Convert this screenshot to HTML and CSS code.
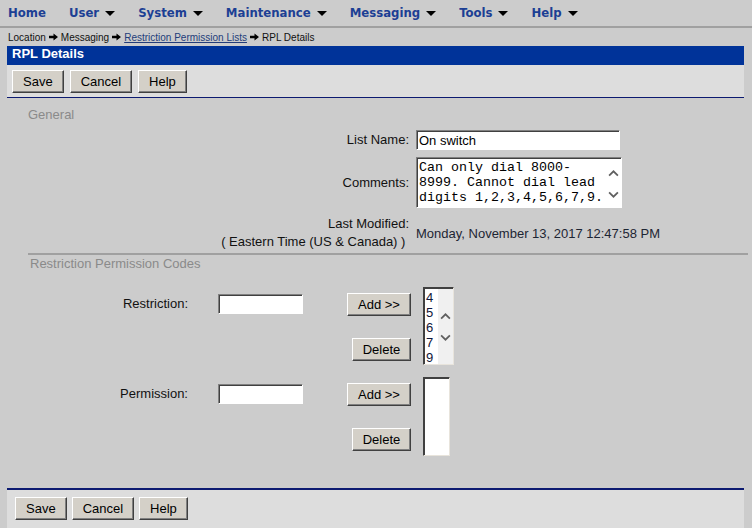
FILE: index.html
```html
<!DOCTYPE html>
<html>
<head>
<meta charset="utf-8">
<link rel="stylesheet" href="styles.css">
</head>
<body>
<div class="nav">
  <div class="nav-item">Home</div>
  <div class="nav-item">User <span class="tri"></span></div>
  <div class="nav-item">System <span class="tri"></span></div>
  <div class="nav-item">Maintenance <span class="tri"></span></div>
  <div class="nav-item">Messaging <span class="tri"></span></div>
  <div class="nav-item">Tools <span class="tri"></span></div>
  <div class="nav-item">Help <span class="tri"></span></div>
</div>
<div class="crumbs">
  <span>Location</span>
  <svg class="arr" viewBox="0 0 10 8" width="9" height="8"><path d="M0 2.5H5V0L10 4L5 8V5.5H0Z" fill="#000"/></svg>
  <span>Messaging</span>
  <svg class="arr" viewBox="0 0 10 8" width="9" height="8"><path d="M0 2.5H5V0L10 4L5 8V5.5H0Z" fill="#000"/></svg>
  <a class="crumb-link">Restriction Permission Lists</a>
  <svg class="arr" viewBox="0 0 10 8" width="9" height="8"><path d="M0 2.5H5V0L10 4L5 8V5.5H0Z" fill="#000"/></svg>
  <span>RPL Details</span>
</div>
<div class="page">
  <div class="titlebar">RPL Details</div>
  <div class="toolbar">
    <button class="btn">Save</button>
    <button class="btn">Cancel</button>
    <button class="btn">Help</button>
  </div>
  <div class="content">
    <div class="section-title">General</div>
    <div class="form">
      <div class="label">List Name:</div>
      <div class="field"><input class="text-input wide" type="text" value="On switch"></div>
      <div class="label">Comments:</div>
      <div class="field">
        <div class="textarea-box">
          <textarea class="ta">Can only dial 8000-8999. Cannot dial lead digits 1,2,3,4,5,6,7,9.</textarea>
          <div class="sbar">
            <svg viewBox="0 0 10 6" width="11" height="7"><path d="M1 5L5 1L9 5" fill="none" stroke="#606060" stroke-width="1.6"/></svg>
            <svg viewBox="0 0 10 6" width="11" height="7"><path d="M1 1L5 5L9 1" fill="none" stroke="#606060" stroke-width="1.6"/></svg>
          </div>
        </div>
      </div>
      <div class="label two">Last Modified:<br>( Eastern Time (US &amp; Canada) )&nbsp;</div>
      <div class="field value">Monday, November 13, 2017 12:47:58 PM</div>
    </div>
    <div class="separator"></div>
    <div class="section-title sec2">Restriction Permission Codes</div>
    <div class="code-row">
      <div class="code-label">Restriction:</div>
      <input class="text-input small" type="text">
      <div class="code-btns">
        <button class="btn add">Add &gt;&gt;</button>
        <button class="btn del">Delete</button>
      </div>
      <div class="listbox">
        <div class="items"><div>4</div><div>5</div><div>6</div><div>7</div><div>9</div></div>
        <div class="lsbar">
          <svg viewBox="0 0 10 6" width="11" height="7"><path d="M1 5L5 1L9 5" fill="none" stroke="#606060" stroke-width="1.6"/></svg>
          <svg viewBox="0 0 10 6" width="11" height="7"><path d="M1 1L5 5L9 1" fill="none" stroke="#606060" stroke-width="1.6"/></svg>
        </div>
      </div>
    </div>
    <div class="code-row row2">
      <div class="code-label">Permission:</div>
      <input class="text-input small" type="text">
      <div class="code-btns">
        <button class="btn add">Add &gt;&gt;</button>
        <button class="btn del">Delete</button>
      </div>
      <div class="listbox empty"></div>
    </div>
  </div>
  <div class="footer">
    <button class="btn">Save</button>
    <button class="btn">Cancel</button>
    <button class="btn">Help</button>
  </div>
</div>
</body>
</html>
```
FILE: styles.css
```css
html, body {
  margin: 0;
  padding: 0;
  background: #cccccc;
  font-family: "Liberation Sans", Arial, sans-serif;
  font-size: 13px;
  color: #111;
  overflow: hidden;
  height: 528px;
}

.nav {
  height: 26px;
  border-bottom: 2px solid #a0a0a0;
  display: flex;
  align-items: center;
  padding-left: 8px;
  gap: 23px;
}
.nav-item {
  font-family: "DejaVu Sans Condensed", "DejaVu Sans", sans-serif;
  font-stretch: condensed;
  font-weight: bold;
  font-size: 13px;
  color: #1c3f94;
  display: flex;
  align-items: center;
  gap: 6px;
  line-height: 16px;
  margin-top: -1px;
}
.tri {
  width: 0;
  height: 0;
  border-left: 5px solid transparent;
  border-right: 5px solid transparent;
  border-top: 5px solid #000;
  margin-top: 1px;
}

.crumbs {
  height: 18px;
  display: flex;
  align-items: center;
  gap: 3px;
  padding-left: 8px;
  padding-top: 1px;
  box-sizing: border-box;
  font-size: 10px;
  color: #111;
}
.arr { margin-top: -1px; }
.crumb-link {
  color: #233d7a;
  text-decoration: underline;
}

.page {
  margin-left: 7px;
  width: 737px;
}
.titlebar {
  background: #003399;
  color: #fff;
  font-weight: bold;
  font-size: 13px;
  height: 19px;
  line-height: 16px;
  padding-left: 5px;
}
.toolbar {
  background: #dddddd;
  height: 33px;
  box-sizing: border-box;
  border-bottom: 1px solid #0c1a70;
  display: flex;
  align-items: flex-start;
  gap: 6px;
  padding: 5px 0 0 5px;
}

.btn {
  font-family: "Liberation Sans", Arial, sans-serif;
  font-size: 13px;
  color: #000;
  background: #d4d0c8;
  height: 23px;
  padding: 0 10px;
  margin: 0;
  border: 1px solid;
  border-color: #ffffff #404040 #404040 #ffffff;
  box-shadow: inset -1px -1px 0 #808080;
  border-radius: 0;
  line-height: 19px;
}

.content {
  box-sizing: border-box;
  height: 390px;
  padding-top: 9px;
}
.section-title {
  color: #8a8a8a;
  font-size: 13px;
  line-height: 16px;
  padding-left: 21px;
}
.form {
  display: grid;
  grid-template-columns: 402px auto;
  column-gap: 7px;
  row-gap: 7px;
  margin-top: 7px;
  align-items: center;
}
.label {
  text-align: right;
  line-height: 18px;
}
.field { display: flex; align-items: center; }
.value { color: #1d2533; }

.text-input {
  box-sizing: border-box;
  height: 20px;
  border: 1px solid;
  border-color: #808080 #ffffff #ffffff #808080;
  box-shadow: inset 1px 1px 0 #404040;
  background: #fff;
  font-family: "Liberation Sans", Arial, sans-serif;
  font-size: 13px;
  padding: 0 2px;
  margin: 0;
  outline: none;
}
.text-input.wide { width: 204px; }
.text-input.small { width: 85px; }

.textarea-box {
  box-sizing: border-box;
  width: 206px;
  height: 51px;
  border: 1px solid;
  border-color: #808080 #ffffff #ffffff #808080;
  box-shadow: inset 1px 1px 0 #404040;
  background: #fff;
  display: flex;
}
.ta {
  flex: 1;
  min-width: 0;
  border: none;
  outline: none;
  resize: none;
  overflow: hidden;
  background: transparent;
  font-family: "Liberation Mono", "Courier New", monospace;
  font-size: 13.33px;
  line-height: 15px;
  padding: 2px 0 0 2px;
  margin: 0;
  color: #000;
}
.sbar {
  width: 16px;
  flex: none;
  display: flex;
  flex-direction: column;
  align-items: center;
  justify-content: center;
  gap: 14px;
  padding-top: 2px;
}

.separator {
  margin-top: 2px;
  margin-left: 21px;
  width: 720px;
  border-top: 2px solid #a0a0a0;
}
.section-title.sec2 {
  margin-top: 1px;
  padding-left: 23px;
}

.code-row {
  display: flex;
  align-items: flex-start;
  margin-top: 15px;
}
.code-row.row2 { margin-top: 12px; }
.code-label {
  width: 181px;
  text-align: right;
  margin-top: 7px;
  line-height: 20px;
}
.code-row .text-input {
  margin-left: 30px;
  margin-top: 7px;
}
.code-btns {
  width: 108px;
  display: flex;
  flex-direction: column;
  align-items: flex-end;
  gap: 22px;
  margin-top: 6px;
}
.btn.add { width: 64px; padding: 0; }
.btn.del { width: 59px; padding: 0; }

.listbox {
  box-sizing: border-box;
  margin-left: 12px;
  width: 31px;
  height: 78px;
  border: 1px solid;
  border-color: #404040 #e8e4dc #e8e4dc #404040;
  box-shadow: inset 1px 1px 0 #404040;
  background: #fff;
  display: flex;
}
.listbox.empty {
  width: 27px;
  height: 79px;
}
.items {
  padding: 2px 0 0 2px;
  line-height: 15px;
  font-size: 13px;
  width: 12px;
  color: #10163a;
}
.lsbar {
  flex: 1;
  background: #f0f0f0;
  display: flex;
  flex-direction: column;
  align-items: center;
  justify-content: center;
  gap: 14px;
  margin-top: 1px;
}

.footer {
  background: #dddddd;
  border-top: 2px solid #0c1a70;
  height: 40px;
  box-sizing: border-box;
  display: flex;
  align-items: flex-start;
  gap: 5px;
  padding: 7px 0 0 8px;
}
```
